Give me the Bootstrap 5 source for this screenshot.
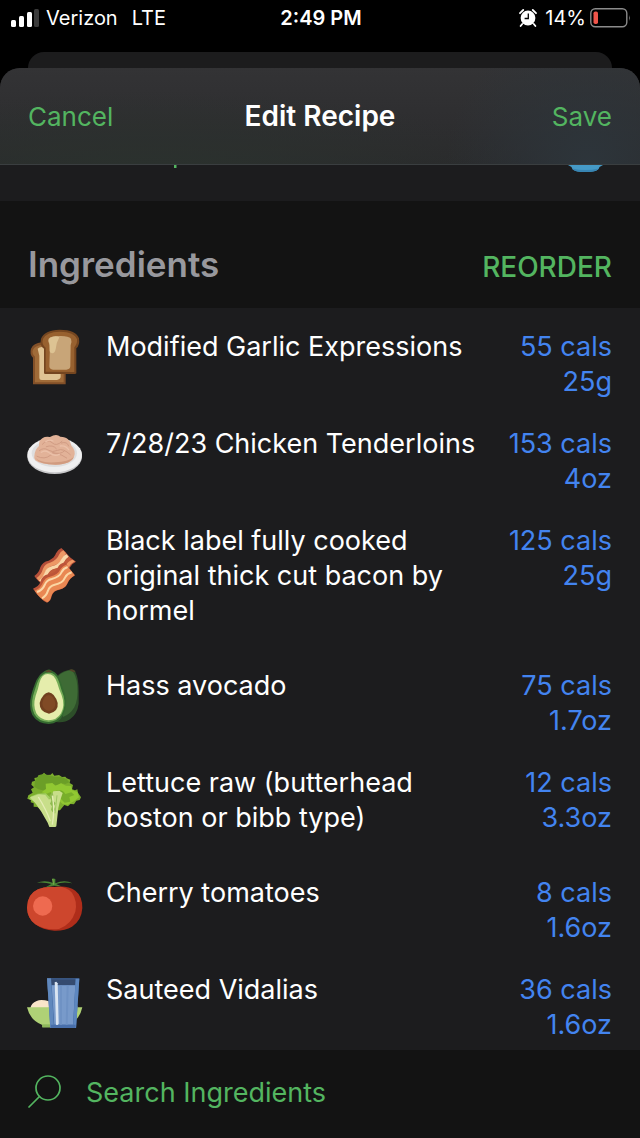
<!DOCTYPE html>
<html lang="en" data-bs-theme="dark">
<head>
<meta charset="utf-8">
<meta name="viewport" content="width=device-width, initial-scale=1">
<title>Edit Recipe</title>
<link href="https://cdn.jsdelivr.net/npm/bootstrap@5.3.0/dist/css/bootstrap.min.css" rel="stylesheet">
<style>
  body { font-family: Inter, "Liberation Sans", sans-serif; font-size: 27px; line-height: 35px; background: #000; color: #fff; }
  .status-bar { height: 36px; padding: 0 9px 0 11px; font-size: 20px; line-height: 36px; }
  .side { flex: 1 1 0; }
  .carrier { gap: 14px; margin-left: 6px; }
  .clock { font-weight: 600; }
  .sheet-behind { height: 16px; margin: 16px 28px 0; border-radius: 16px 16px 0 0; background: #1c1c1d; }
  .sheet { background: #1c1c1e; border-radius: 20px 20px 0 0; }
  .sheet-bar { height: 97px; padding: 0 28px; border-radius: 20px 20px 0 0; border-bottom: 1px solid #3a3e40;
    background: radial-gradient(circle at 92% 100%, #2d353b, transparent 24%), radial-gradient(ellipse at 24% 110%, #2b322e, transparent 55%), linear-gradient(#333335, #2a2a2c); }
  .sheet-title { font-size: 28px; line-height: 35px; font-weight: 600; }
  .text-btn { color: #53b560; background: none; border: 0; padding: 0; text-align: left; }
  .sheet-bar .text-btn { font-size: 26px; }
  .peek { height: 36px; padding: 0 36px 0 173px; }
  .section-head { height: 107px; padding: 18px 28px 0; background: #131313; }
  .section-title { font-size: 35px; line-height: 44px; font-weight: 600; color: #98989d; }
  .section-head .reorder { padding-top: 7px; font-size: 28px; font-weight: 500; }
  .food-row { padding: 0 28px 0 27px; }
  .food-icon { width: 56px; height: 56px; flex: none; }
  .food-name { padding: 21px 0 19px; margin-left: 23px; }
  .food-amount { width: 120px; flex: none; padding: 21px 0 6px; color: #4384f0; text-align: right; }
  .search-bar { height: 88px; padding: 0 28px 4px; background: #131313; }
  .search-bar .text-btn { gap: 25px; }
</style>
</head>
<body class="d-flex flex-column min-vh-100">
<header class="status-bar d-flex align-items-center">
  <div class="side d-flex align-items-center">
    <svg width="29" height="18" viewBox="0 0 29 18" aria-hidden="true"><g fill="#fff"><rect y="11" width="5" height="7" rx="1.5"/><rect x="8" y="7" width="5" height="11" rx="1.5"/><rect x="16" y="3" width="5" height="15" rx="1.5"/></g><rect x="23" y="0" width="5" height="18" rx="1.5" fill="#3a3a3a"/></svg>
    <div class="carrier d-flex"><span>Verizon</span><span>LTE</span></div>
  </div>
  <div class="clock">2:49 PM</div>
  <div class="side d-flex align-items-center justify-content-end">
    <svg class="me-2" width="18" height="18" viewBox="0 0 18 18" aria-hidden="true"><circle cx="9" cy="9" r="7.4" fill="#fff"/><path d="M1 4.2 4.2 1M17 4.2 13.8 1M3.2 15l-1.6 2M14.8 15l1.6 2" stroke="#fff" stroke-width="1.8" stroke-linecap="round"/><path d="M9.3 4.5v5H5.6" fill="none" stroke="#000" stroke-width="1.3"/></svg>
    <span class="me-1">14%</span>
    <svg width="41" height="20" viewBox="0 0 41 20" aria-hidden="true"><rect x=".8" y=".8" width="36" height="18" rx="4.5" fill="none" stroke="#8b8b8b" stroke-width="1.4"/><rect x="3.5" y="3.5" width="4.5" height="12.5" rx="1.8" fill="#f0554a"/><path d="M39 7q1.6 3 0 6z" fill="#8b8b8b"/></svg>
  </div>
</header>
<div class="sheet-behind"></div>
<main class="sheet d-flex flex-column flex-grow-1">
  <div class="sheet-bar d-flex align-items-center">
    <div class="side"><button type="button" class="text-btn">Cancel</button></div>
    <h1 class="sheet-title m-0">Edit Recipe</h1>
    <div class="side text-end"><button type="button" class="text-btn">Save</button></div>
  </div>
  <div class="peek d-flex justify-content-between align-items-start">
    <svg width="4" height="3" viewBox="0 0 4 3" aria-hidden="true"><path d="M1 0h2.5v3H1z" fill="#53b560"/></svg>
    <svg width="36" height="8" viewBox="0 0 36 8" aria-hidden="true"><path d="M0 0H35L31.5 2Q30.5 6 25 6.400Q17 7.400 9.500 6.400Q4 5.500 3.500 2Z" fill="#459ac7"/><path d="M4 3.500Q17 6.500 31 3.500Q29 6 25 6.400Q17 7.400 9.500 6.400Q5 5.700 4 3.500Z" fill="#3885b3"/></svg>
  </div>
  <div class="section-head d-flex justify-content-between align-items-center">
    <h2 class="section-title m-0">Ingredients</h2>
    <button type="button" class="text-btn reorder">REORDER</button>
  </div>
  <ul class="list-unstyled m-0 flex-grow-1">
    <li class="food-row d-flex align-items-center">
      <svg class="food-icon" viewBox="36 40 168 168" aria-hidden="true">
        <path d="M54 206V126Q43 116 48 99Q56 82 80 80L152 100V206Z" fill="#835028"/><path d="M60 200V123Q49 113 54 102Q61 90 80 88L146 110V200Z" fill="#a06b38"/><path d="M73 190V120L68 99Q76 91 90 96L137 120V185Q134 193 126 193H80Q73 193 73 187Z" fill="#e0c494"/>
        <path d="M87 172V99Q73 90 78 69Q88 43 134 42Q184 42 192 68Q195 89 184 98V173Q184 175 178 175H91Q87 175 87 172Z" fill="#754620"/><path d="M92 168V96Q79 86 84 70Q93 49 134 48Q179 49 186 71Q187 85 178 95V169Z" fill="#98612f"/><path d="M103 152L105 88Q96 75 102 68Q110 61 133 61Q160 60 168 69Q171 76 167 89L166 152Q165 162 154 162H114Q103 161 103 152Z" fill="#c8a578"/><path d="M103 83Q96 66 114 63Q125 60 133 65Q124 80 122 101Q119 114 111 113Q104 112 104 106Z" fill="#ddc393"/>
      </svg>
      <div class="food-name flex-grow-1 align-self-start">Modified Garlic Expressions</div>
      <div class="food-amount align-self-start">55 cals<br>25g</div>
    </li>
    <li class="food-row d-flex align-items-center">
      <svg class="food-icon" viewBox="36 31 168 168" aria-hidden="true">
        <ellipse cx="119" cy="123" rx="82" ry="52" fill="#c8c8ca"/><ellipse cx="119" cy="118" rx="82" ry="52" fill="#efeff0"/><ellipse cx="118" cy="113" rx="68" ry="41" fill="#dededf"/>
        <path d="M58 122Q59 101 72 91Q70 75 83 67Q92 61 105 64Q124 53 136 63Q152 63 159 71Q167 78 169 90Q184 105 177 123Q170 145 122 147Q78 147 61 134Q56 129 58 122Z" fill="#e2b298"/><path d="M60 126Q79 143 120 140Q161 139 176 124Q169 145 122 147Q74 147 60 126Z" fill="#d19b80"/><path d="M73 105Q86 94 99 103T128 104T166 117M82 86Q98 68 111 81T141 77M66 122Q89 133 106 119T155 127M94 93Q114 86 124 99M139 82Q157 76 161 91M112 110Q137 119 149 105" fill="none" stroke="#d19c84" stroke-width="3" stroke-linecap="round"/><path d="M79 110Q91 101 104 112T133 116M92 78Q103 70 114 76M136 91Q151 88 161 102" fill="none" stroke="#ebc1aa" stroke-width="4" stroke-linecap="round"/>
      </svg>
      <div class="food-name flex-grow-1 align-self-start">7/28/23 Chicken Tenderloins</div>
      <div class="food-amount align-self-start">153 cals<br>4oz</div>
    </li>
    <li class="food-row d-flex align-items-center">
      <svg class="food-icon" viewBox="36 34 168 168" aria-hidden="true">
        <path d="M58 121Q72 112 76 95Q82 78 101 75Q119 67 123 53Q128 42 139 37Q151 47 165 65L183 78Q171 83 164 96Q154 111 139 115Q119 119 109 134L85 146Q72 142 58 121Z" fill="#b54f39"/><path d="M65 127Q79 117 84 99Q90 84 105 81Q126 73 132 57Q136 48 145 44L153 53Q144 64 139 74Q132 87 113 90Q96 95 91 109Q87 126 73 137Z" fill="#ed9865"/><path d="M72 135Q85 125 89 111Q94 96 110 92Q132 87 139 71Q144 60 154 55L161 63Q151 69 146 81Q138 96 119 99Q105 102 99 116Q94 130 80 140Z" fill="#f9d7a8"/><path d="M81 141Q93 132 99 116Q105 103 119 100Q139 96 148 80Q153 68 163 65L171 72Q158 77 155 90Q144 105 126 108Q109 113 105 130L92 144Z" fill="#c25b3b"/><path d="M172 72L180 77Q168 83 162 94L151 92Q157 77 172 72Z" fill="#f09965"/>
        <path d="M54 159Q72 153 77 137Q82 119 100 116Q123 111 128 96Q135 83 150 80L164 99L180 119Q164 128 158 143Q151 158 134 162Q114 165 110 181Q108 196 96 201Q77 193 54 159Z" fill="#bd5439"/><path d="M59 165Q77 158 83 142Q89 126 105 123Q129 117 135 103Q140 92 154 87L179 119Q163 128 157 143Q151 158 134 161Q114 165 109 181Q107 194 97 200Q76 190 59 165Z" fill="#e98752"/><path d="M66 169Q82 164 89 148Q95 133 110 130Q134 124 140 109Q145 98 158 94" fill="none" stroke="#fbd8aa" stroke-width="6"/><path d="M81 188Q94 181 99 165Q103 151 119 147Q143 143 150 126Q156 114 170 110" fill="none" stroke="#fbd6a3" stroke-width="6"/>
      </svg>
      <div class="food-name flex-grow-1 align-self-start">Black label fully cooked original thick cut bacon by hormel</div>
      <div class="food-amount align-self-start">125 cals<br>25g</div>
    </li>
    <li class="food-row d-flex align-items-center">
      <svg class="food-icon" viewBox="36 37 168 168" aria-hidden="true">
        <path d="M130 57Q144 45 165 42Q181 40 182 51Q190 66 191 104V144Q187 175 165 191Q148 203 123 199Z" fill="#2d4e29"/><path d="M129 61Q146 46 169 44Q184 56 187 91Q190 132 178 155Q165 177 144 184Z" fill="#3e6b35"/><path d="M162 43Q174 36 181 48Q175 51 162 43Z" fill="#544329"/>
        <path d="M88 47Q103 36 112 46Q129 53 137 78Q143 93 151 119Q158 151 145 177Q132 203 101 205Q68 204 52 178Q40 153 49 118Q54 98 60 84Q69 59 88 47Z" fill="#356b30"/><path d="M92 52Q103 48 112 53Q127 61 133 81Q138 100 146 121Q153 151 140 176Q127 198 101 199Q71 198 58 175Q47 151 54 121Q60 101 66 83Q75 58 92 52Z" fill="#75ad58"/><path d="M98 55Q119 55 127 83Q131 98 140 119Q151 149 138 173Q125 194 101 194Q76 193 64 173Q53 150 62 120Q69 102 73 82Q80 55 98 55Z" fill="#e5edac"/><path d="M101 110Q119 112 128 142Q131 168 102 174Q73 169 74 142Q83 112 101 110Z" fill="#71401f"/><path d="M101 118Q116 120 121 142Q122 162 102 166Q82 162 82 142Q87 120 101 118Z" fill="#804a25"/><path d="M91 48Q101 38 111 48Q101 52 91 48Z" fill="#5a4929"/>
      </svg>
      <div class="food-name flex-grow-1 align-self-start">Hass avocado</div>
      <div class="food-amount align-self-start">75 cals<br>1.7oz</div>
    </li>
    <li class="food-row d-flex align-items-center">
      <svg class="food-icon" viewBox="36 33 168 168" aria-hidden="true">
        <path d="M51 65L60 62L58 54L70 52L71 45L81 44L87 38L94 45L107 44L112 39L118 47L132 45L141 51L151 50L155 55L166 59L164 69L174 75L171 88L180 91L187 88L189 98L198 112L194 120L184 122L177 133L166 132L159 139L148 135L135 151L83 154L67 141L56 140L56 130L47 127L48 121L37 116L40 106L53 98L48 88L57 82L49 74Z" fill="#7cae2d"/>
        <path d="M60 62L71 46L87 42L107 47L118 50L137 50L154 57L163 67L151 72L138 70L128 77L113 72L101 86L83 91L70 88L58 80Z" fill="#6b9e27"/><path d="M92 71L112 69L121 77L138 70L153 77L168 78L172 91L187 96L192 112L177 124L158 134L143 132L129 120L115 110L107 96L95 101L80 97L93 87Z" fill="#91c832"/><path d="M49 109L68 101L92 100L105 112L98 131L84 139L59 126L42 116Z" fill="#a4cf64"/><path d="M121 93Q143 85 151 102L169 97L178 105L163 111L166 125L149 128L138 117Z" fill="#78ae2a"/>
        <path d="M45 112L72 103L91 105L102 119L108 110L115 94L133 92L143 99L135 123L130 144L124 199Q118 204 103 201L98 188L79 155L63 132Z" fill="#c8de8a"/><path d="M103 108L112 96L115 105L112 119L122 130L116 139L121 149L113 157L108 149L111 139L105 131L109 122Z" fill="#8fbb50"/><path d="M112 107Q120 150 112 194M70 111Q94 149 106 184" fill="none" stroke="#e5edb6" stroke-width="4"/><path d="M126 106L120 160" fill="none" stroke="#9dc761" stroke-width="3"/>
      </svg>
      <div class="food-name flex-grow-1 align-self-start">Lettuce raw (butterhead boston or bibb type)</div>
      <div class="food-amount align-self-start">12 cals<br>3.3oz</div>
    </li>
    <li class="food-row d-flex align-items-center">
      <svg class="food-icon" viewBox="36 28 168 168" aria-hidden="true">
        <path d="M36 126Q37 85 69 71Q93 60 119 64Q156 58 181 75Q202 91 202 127Q200 164 171 183Q149 196 118 195Q83 193 61 176Q37 158 36 126Z" fill="#af2d1a"/><path d="M36 126Q37 85 69 71Q93 60 119 64Q151 60 171 81Q188 107 181 138Q169 176 132 190Q90 195 61 176Q37 158 36 126Z" fill="#cd462d"/><circle cx="83" cy="121" r="29" fill="#ee6a50"/><path d="M112 62L97 62L118 60L139 62L123 55Q145 47 172 53Q149 41 121 53V40L112 38L116 53Q91 41 65 51Q92 49 109 55L92 65Z" fill="#4b8735"/><path d="M116 57L113 40" stroke="#75a746" stroke-width="4"/>
      </svg>
      <div class="food-name flex-grow-1 align-self-start">Cherry tomatoes</div>
      <div class="food-amount align-self-start">8 cals<br>1.6oz</div>
    </li>
    <li class="food-row d-flex align-items-center">
      <svg class="food-icon" viewBox="36 20 168 168" aria-hidden="true">
        <path d="M46 128Q49 113 65 107Q78 100 102 108L187 122V132H46Z" fill="#fae5c9"/><path d="M36 126H202Q196 157 171 174L160 186H82V179Q45 165 36 126Z" fill="#afd176"/><path d="M82 177H160V186H82Z" fill="#8eb85c"/>
        <path d="M96 39H193L183 190H106Z" fill="#4269a2"/><path d="M110 60H181L174 178H118Z" fill="#789aca"/><path d="M107 42H182L181 59H109Z" fill="#354b70"/><path d="M96 39H108L117 188H106Z" fill="#6088bd"/><path d="M182 40H193L183 190H174Z" fill="#5d87c0"/><path d="M108 178H182L181 190H108Z" fill="#486fab"/><path d="M119 51L124 49L128 54L131 175Q129 181 123 178Z" fill="#dae5f2"/><path d="M138 61V178M158 61L155 178" stroke="#6f92c4" stroke-width="6"/>
      </svg>
      <div class="food-name flex-grow-1 align-self-start">Sauteed Vidalias</div>
      <div class="food-amount align-self-start">36 cals<br>1.6oz</div>
    </li>
  </ul>
  <div class="search-bar d-flex align-items-center">
    <button type="button" class="text-btn d-flex align-items-center">
      <svg width="33" height="34" viewBox="0 0 33 34" fill="none" stroke="#53b560" stroke-width="1.7" stroke-linecap="round" aria-hidden="true"><circle cx="20" cy="13" r="12"/><path d="M11.500 21.500 1 32"/></svg>
      <span>Search Ingredients</span>
    </button>
  </div>
</main>
<script src="https://cdn.jsdelivr.net/npm/bootstrap@5.3.0/dist/js/bootstrap.bundle.min.js"></script>
</body>
</html>
